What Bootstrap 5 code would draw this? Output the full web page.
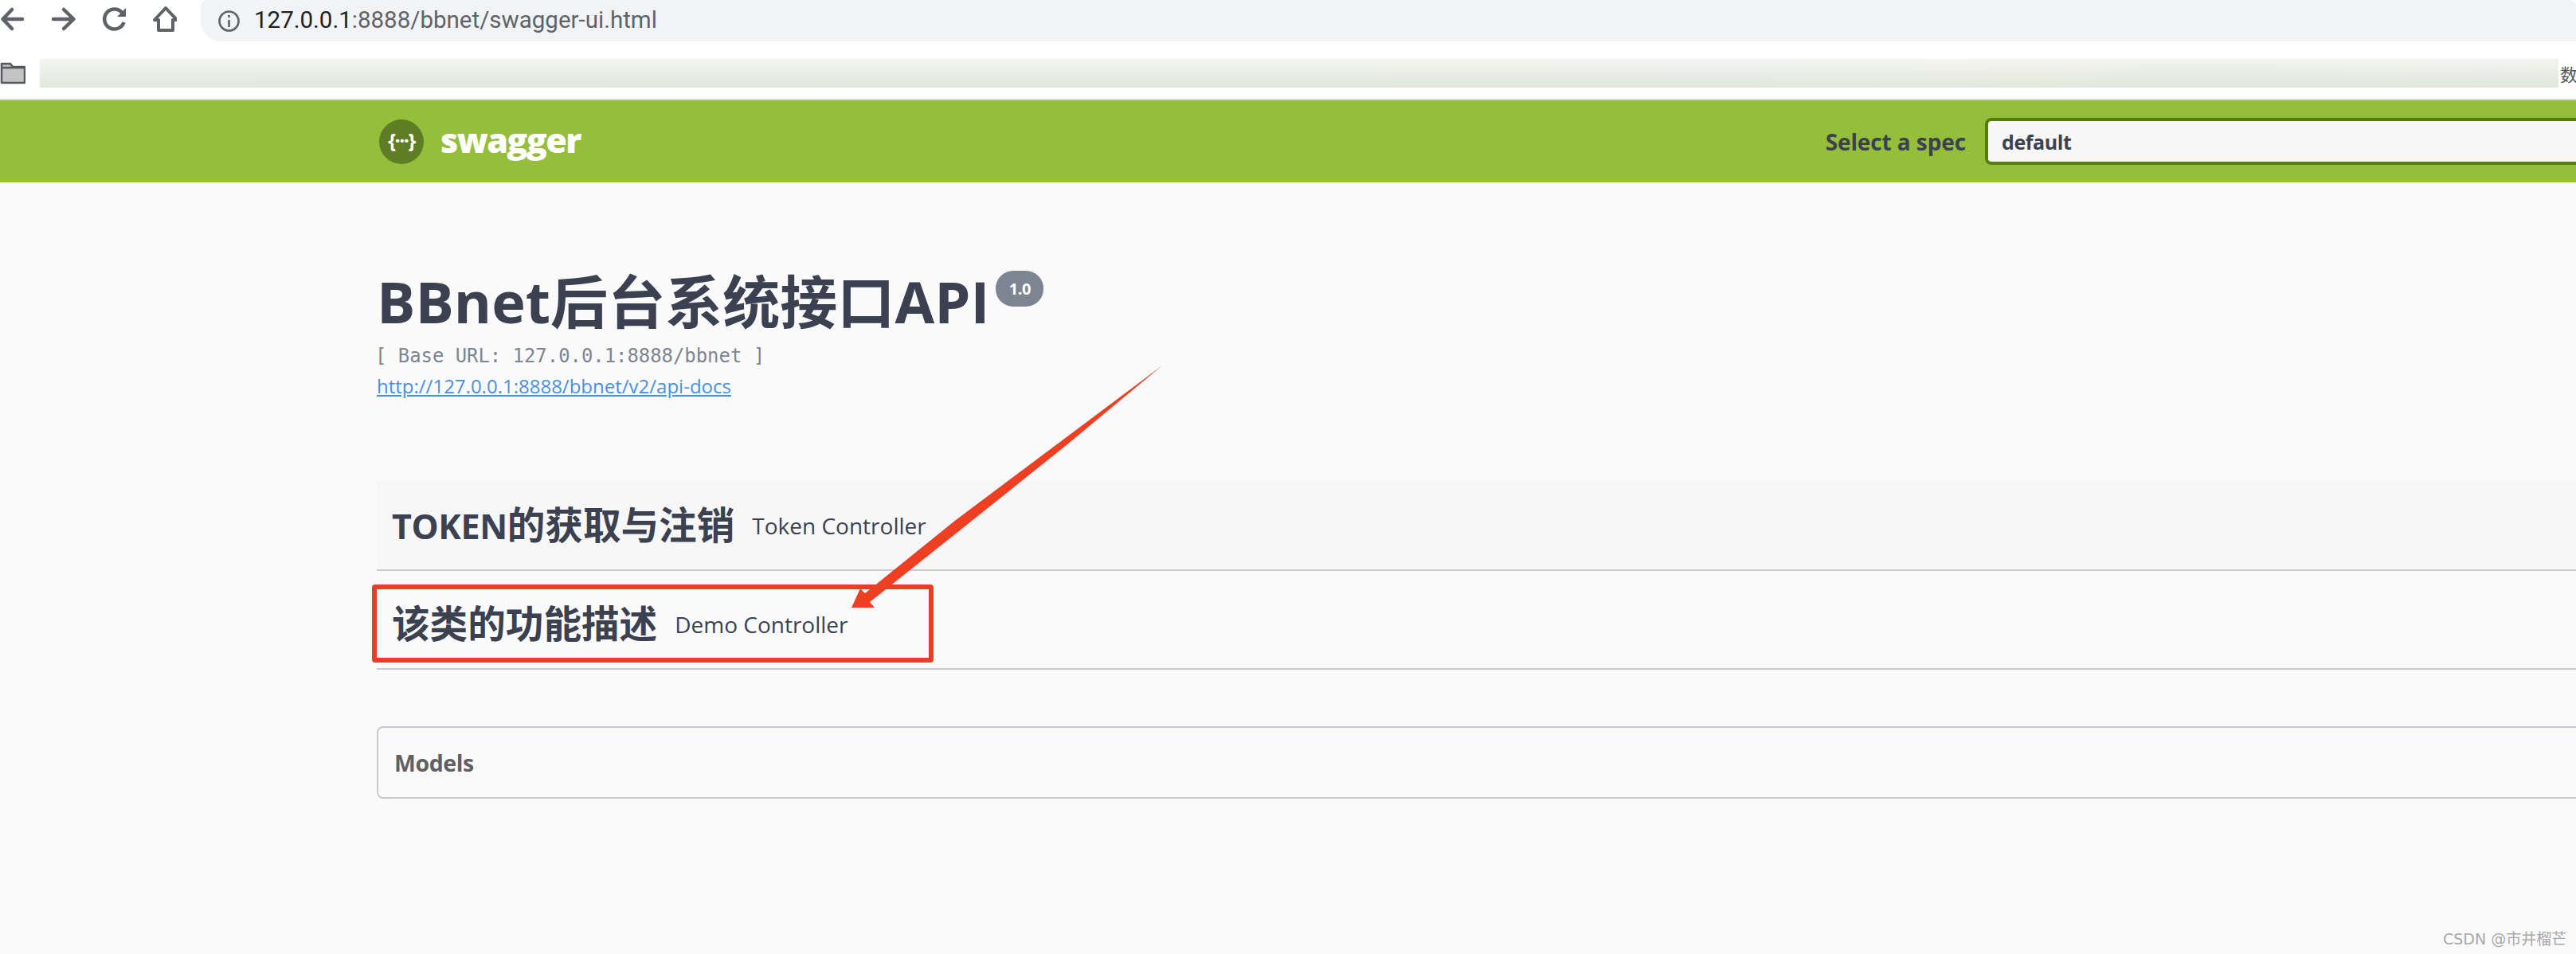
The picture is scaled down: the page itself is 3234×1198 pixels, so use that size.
<!DOCTYPE html>
<html lang="zh-CN">
<head>
<meta charset="utf-8">
<title>Swagger UI</title>
<link href="https://cdn.jsdelivr.net/npm/bootstrap@5.3.0/dist/css/bootstrap.min.css" rel="stylesheet">
<style>
html,body{width:3234px;height:1198px;overflow:hidden;background:#fafafa;}
body{font-family:"Open Sans","Noto Sans CJK SC",sans-serif;color:#3b4151;position:relative;}
.tool-row{height:52px;background:#fff;gap:26px;}
.tool-icon{width:36px;height:52px;flex:none;}
.addr-bar{height:52px;margin-left:4px;background:#f1f3f4;border-radius:8px 8px 0 26px;padding-left:22px;gap:18px;}
.addr-text{font-family:Roboto,"Liberation Sans",sans-serif;font-size:29.5px;color:#5f6368;position:relative;top:-1px;}
.addr-host{color:#202124;}
.book-row{height:74px;background:#fff;border-bottom:2px solid #d6d7d8;padding-top:22px;overflow:hidden;}
.book-folder{flex:none;margin-top:4px;}
.book-strip{width:3162px;height:36px;margin-left:18px;flex:none;background:
 linear-gradient(180deg,rgba(246,246,244,.75),rgba(222,230,216,.75)),
 linear-gradient(90deg,#eceee8 0,#e8ece4 30%,#e6ecec 68%,#eef0ea 74%,#f3efe4 78%,#e6eae2 84%,#e8ece4 93%,#e3ecec 97%,#e6ebe4 100%);}
.book-end{font-size:22px;line-height:36px;color:#555;margin-left:2px;white-space:nowrap;font-family:"Noto Sans CJK SC",sans-serif;}
.spec-bar{height:103px;background:#95be3a;padding-left:476px;}
.logo-disc{width:56px;height:56px;border-radius:50%;background:#5f7d25;color:#fff;font:700 25px/1 "Open Sans",sans-serif;letter-spacing:-1.5px;flex:none;padding-bottom:3px;}
.logo-word{font-size:43px;font-weight:800;color:#fff;margin-left:21px;letter-spacing:-1.6px;line-height:1;position:relative;top:-2px;}
.spec-label{font-size:28px;font-weight:700;color:#3b4151;margin-right:24px;letter-spacing:-.1px;}
.spec-select{width:800px;height:59px;flex:none;margin-right:-58px;background:#f7f7f7;background-image:none;border:4px solid #547f00;border-radius:8px;font:700 25px "Open Sans",sans-serif;color:#3b4151;padding:0 17px;letter-spacing:-.4px;}
.doc-main{padding-left:473px;overflow:hidden;}
.api-head{padding-top:104px;height:374px;}
.api-title{font-size:72px;font-weight:700;line-height:90px;margin:0;color:#3b4151;letter-spacing:.05px;}
.ver-pill{width:60px;height:45px;border-radius:22px;background:#7d8492;color:#fff;font-size:20px;font-weight:700;margin:7px 0 0 8px;flex:none;letter-spacing:-.5px;}
.base-line{font-family:"DejaVu Sans Mono","Liberation Mono",monospace;font-size:23.9px;line-height:30px;color:#7d8492;margin:9px 0 0 -2px;}
.spec-link{display:inline-block;font-size:24px;line-height:34px;color:#4990e2;margin-top:6px;}
.tag-row{height:124px;border-bottom:2px solid #c9c9d0;padding-left:19px;padding-top:10px;margin-right:-40px;}
.tag-row.is-first{height:114px;background:#f7f7f7;padding-top:0;}
.tag-name{font-size:47.6px;font-weight:700;color:#3b4151;line-height:1;margin:0;white-space:nowrap;}
.tag-latin{font-size:43px;letter-spacing:-.4px;}
.tag-desc{font-size:28px;color:#3b4151;margin-left:22px;position:relative;top:1px;}
.tag-chev{margin-left:auto;flex:none;margin-right:7px;}
.model-box{height:91px;margin-top:71px;margin-right:-40px;border:2px solid #c9c9d0;border-radius:8px;padding-left:20px;padding-top:2px;}
.model-title{font-size:28.5px;font-weight:700;color:#606060;letter-spacing:-.4px;}
.mark-layer{position:absolute;left:0;top:0;width:3234px;height:1198px;pointer-events:none;}
.wm-text{position:absolute;left:3067px;top:1167px;font:19px/24px "DejaVu Sans","Noto Sans CJK SC",sans-serif;color:#a8a8a8;white-space:nowrap;}
</style>
</head>
<body>
<header>
  <div class="tool-row d-flex align-items-start">
    <svg class="tool-icon" viewBox="0 0 36 52" fill="none" stroke="#5f6368" stroke-width="4.5" stroke-linecap="round" stroke-linejoin="round"><path d="M28 24H4M15 12L3.500 24L15 36"/></svg>
    <svg class="tool-icon" viewBox="62 0 36 52" fill="none" stroke="#5f6368" stroke-width="4.500" stroke-linecap="round" stroke-linejoin="round"><path d="M67 24H91M80 12L92.500 24L80 36"/></svg>
    <svg class="tool-icon" viewBox="124 0 36 52" fill="none" stroke="#5f6368" stroke-width="4.500"><path d="M154 17A12.500 12.500 0 1 0 155.500 28"/><path d="M158 10V21H147Z" fill="#5f6368" stroke="none"/></svg>
    <svg class="tool-icon" viewBox="186 0 36 52" fill="none" stroke="#5f6368" stroke-width="4" stroke-linejoin="round"><path d="M208 10L194 25H199V38H217V25H222Z"/></svg>
    <div class="addr-bar flex-grow-1 d-flex align-items-center">
      <svg width="27" height="27" viewBox="0 0 27 27" fill="none" stroke="#5f6368" stroke-width="2.600"><circle cx="13.500" cy="13.500" r="12"/><path d="M13.500 12V21M13.500 6V9"/></svg>
      <span class="addr-text"><span class="addr-host">127.0.0.1</span>:8888/bbnet/swagger-ui.html</span>
    </div>
  </div>
  <div class="book-row d-flex align-items-start">
    <svg class="book-folder" width="32" height="28" viewBox="0 0 32 28" fill="#c4c4c4" stroke="#55585c" stroke-width="2.500" stroke-linejoin="round"><path d="M2 2H13L16 6H31V26H2Z"/><path d="M2 7H31" fill="none"/></svg>
    <div class="book-strip"></div>
    <span class="book-end">数据</span>
  </div>
  <nav class="spec-bar d-flex align-items-center">
    <div class="logo-disc d-flex align-items-center justify-content-center">{···}</div>
    <span class="logo-word">swagger</span>
    <span class="spec-label ms-auto">Select a spec</span>
    <select class="form-select spec-select"><option>default</option></select>
  </nav>
</header>
<main class="doc-main">
  <section class="api-head">
    <div class="d-flex align-items-start">
      <h2 class="api-title">BBnet后台系统接口API</h2>
      <span class="ver-pill d-flex align-items-center justify-content-center">1.0</span>
    </div>
    <div class="base-line">[ Base URL: 127.0.0.1:8888/bbnet ]</div>
    <a class="spec-link" href="#">http://127.0.0.1:8888/bbnet/v2/api-docs</a>
  </section>
  <section class="tag-row is-first d-flex align-items-center">
    <h4 class="tag-name"><span class="tag-latin">TOKEN</span>的获取与注销</h4>
    <span class="tag-desc">Token Controller</span>
    <svg class="tag-chev" width="30" height="40" viewBox="0 0 30 40" fill="none" stroke="#333" stroke-width="5"><path d="M2 4L18 20L2 36"/></svg>
  </section>
  <section class="tag-row d-flex align-items-center">
    <h4 class="tag-name">该类的功能描述</h4>
    <span class="tag-desc">Demo Controller</span>
    <svg class="tag-chev" width="30" height="40" viewBox="0 0 30 40" fill="none" stroke="#333" stroke-width="5"><path d="M2 4L18 20L2 36"/></svg>
  </section>
  <section class="model-box d-flex align-items-center">
    <span class="model-title">Models</span>
  </section>
</main>
<svg class="mark-layer" viewBox="0 0 3234 1198">
  <rect x="470" y="737" width="699" height="92" fill="none" stroke="#e93d25" stroke-width="6" rx="1"/>
  <polygon fill="#ee3f23" points="1459,459 1200,653 1086,745 1080,739 1069,763 1098,763 1092,756 1200,670 1340,558"/>
</svg>
<div class="wm-text">CSDN @市井榴芒</div>
</body>
</html>
